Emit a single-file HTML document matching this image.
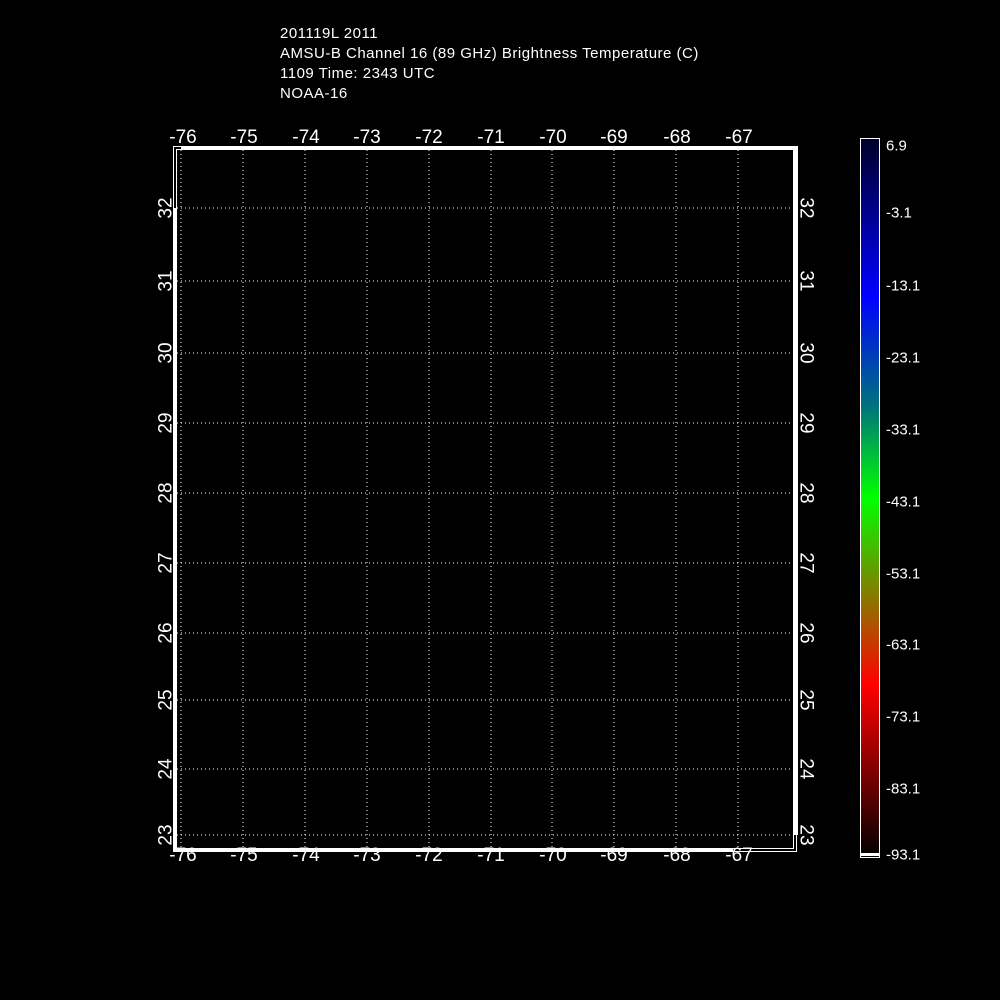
<!DOCTYPE html><html><head><style>
body{margin:0;background:#000;width:1000px;height:1000px;overflow:hidden;position:relative;font-family:"Liberation Sans",sans-serif;color:#fff}
.t{position:absolute;left:280px;font-size:15px;line-height:20px;letter-spacing:0.5px}
.x{position:absolute;font-size:19px;transform:translateX(-50%)}
.yl,.yr{position:absolute;font-size:19px;line-height:19px}
.yl{left:166px;transform:translate(-50%,-50%) rotate(-90deg)}
.yr{left:806px;transform:translate(-50%,-50%) rotate(90deg)}
.cl{position:absolute;left:886px;font-size:15px;transform:translateY(-50%)}
</style></head><body>
<div class="t" style="top:24px">201119L 2011<br>AMSU-B Channel 16 (89 GHz) Brightness Temperature (C)<br>1109 Time: 2343 UTC<br>NOAA-16</div>
<svg width="1000" height="1000" style="position:absolute;left:0;top:0">
<g stroke="#fff" stroke-width="1" stroke-dasharray="1 3" fill="none">
<path d="M181 150V848M243 150V848M305 150V848M367 150V848M429 150V848M491 150V848M552 150V848M614 150V848M676 150V848M738 150V848"/>
<path d="M177 208H794M177 281H794M177 353H794M177 423H794M177 493H794M177 563H794M177 633H794M177 700H794M177 769H794M177 835H794"/>
</g>
<rect x="173.5" y="146.5" width="623" height="705" stroke="#fff" fill="none"/>
<rect x="176.5" y="149.5" width="617" height="699" stroke="#fff" fill="none"/>
<rect x="181" y="146" width="616" height="4" fill="#fff"/>
<rect x="173" y="208" width="4" height="644" fill="#fff"/>
<rect x="173" y="848" width="560" height="4" fill="#fff"/>
<rect x="794" y="146" width="4" height="689" fill="#fff"/>
<defs><linearGradient id="g" x1="0" y1="0" x2="0" y2="1">
<stop offset="0" stop-color="#000028"/><stop offset="0.22" stop-color="#0000ff"/><stop offset="0.37" stop-color="#007080"/><stop offset="0.5" stop-color="#00ff00"/><stop offset="0.63" stop-color="#808000"/><stop offset="0.76" stop-color="#ff0000"/><stop offset="0.88" stop-color="#800000"/><stop offset="1" stop-color="#000"/></linearGradient></defs>
<rect x="860.5" y="138.5" width="19" height="719" fill="url(#g)" stroke="#fff"/>
<rect x="861" y="853" width="18" height="3" fill="#fff"/>
</svg>
<div class="x" style="left:183px;top:127px">-76</div><div class="x" style="left:244px;top:127px">-75</div><div class="x" style="left:306px;top:127px">-74</div><div class="x" style="left:367px;top:127px">-73</div><div class="x" style="left:429px;top:127px">-72</div><div class="x" style="left:491px;top:127px">-71</div><div class="x" style="left:553px;top:127px">-70</div><div class="x" style="left:614px;top:127px">-69</div><div class="x" style="left:677px;top:127px">-68</div><div class="x" style="left:739px;top:127px">-67</div>
<div class="x" style="left:183px;top:845px">-76</div><div class="x" style="left:244px;top:845px">-75</div><div class="x" style="left:306px;top:845px">-74</div><div class="x" style="left:367px;top:845px">-73</div><div class="x" style="left:429px;top:845px">-72</div><div class="x" style="left:491px;top:845px">-71</div><div class="x" style="left:553px;top:845px">-70</div><div class="x" style="left:614px;top:845px">-69</div><div class="x" style="left:677px;top:845px">-68</div><div class="x" style="left:739px;top:845px">-67</div>
<div class="yl" style="top:208px">32</div><div class="yl" style="top:281px">31</div><div class="yl" style="top:353px">30</div><div class="yl" style="top:423px">29</div><div class="yl" style="top:493px">28</div><div class="yl" style="top:563px">27</div><div class="yl" style="top:633px">26</div><div class="yl" style="top:700px">25</div><div class="yl" style="top:769px">24</div><div class="yl" style="top:835px">23</div>
<div class="yr" style="top:208px">32</div><div class="yr" style="top:281px">31</div><div class="yr" style="top:353px">30</div><div class="yr" style="top:423px">29</div><div class="yr" style="top:493px">28</div><div class="yr" style="top:563px">27</div><div class="yr" style="top:633px">26</div><div class="yr" style="top:700px">25</div><div class="yr" style="top:769px">24</div><div class="yr" style="top:835px">23</div>
<div class="cl" style="top:146px">6.9</div><div class="cl" style="top:213px">-3.1</div><div class="cl" style="top:286px">-13.1</div><div class="cl" style="top:358px">-23.1</div><div class="cl" style="top:430px">-33.1</div><div class="cl" style="top:502px">-43.1</div><div class="cl" style="top:574px">-53.1</div><div class="cl" style="top:645px">-63.1</div><div class="cl" style="top:717px">-73.1</div><div class="cl" style="top:789px">-83.1</div><div class="cl" style="top:855px">-93.1</div>
</body></html>
